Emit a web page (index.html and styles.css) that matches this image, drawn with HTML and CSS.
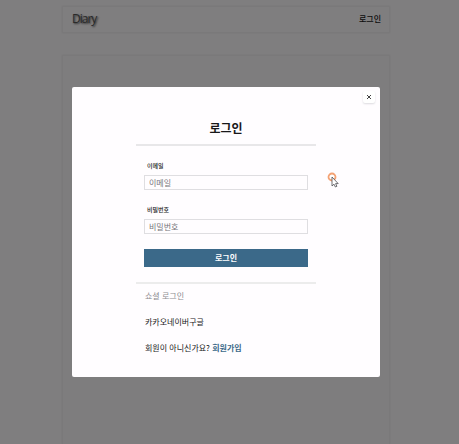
FILE: index.html
```html
<!DOCTYPE html>
<html lang="ko">
<head>
<meta charset="utf-8">
<meta name="viewport" content="width=device-width, initial-scale=1">
<title>Diary</title>
<link rel="stylesheet" href="styles.css">
</head>
<body>
<div class="page">
  <header class="header">
    <a class="logo" href="#">Diary</a>
    <a class="header-link" href="#">로그인</a>
  </header>
  <main class="board"></main>
</div>
<div class="overlay">
  <section class="dialog" role="dialog" aria-modal="true" aria-labelledby="title">
    <button class="close" type="button" aria-label="닫기">
      <svg viewBox="0 0 6 6" aria-hidden="true"><path d="M1 1L5 5M5 1L1 5"/></svg>
    </button>
    <h1 class="title" id="title">로그인</h1>
    <form class="form">
      <label class="label" for="email">이메일</label>
      <input class="field" id="email" type="email" placeholder="이메일">
      <label class="label" for="password">비밀번호</label>
      <input class="field" id="password" type="password" placeholder="비밀번호">
      <button class="submit" type="submit">로그인</button>
    </form>
    <div class="social">
      <h2 class="social-title">쇼셜 로그인</h2>
      <p class="providers"><a href="#">카카오</a><a href="#">네이버</a><a href="#">구글</a></p>
      <p class="join">회원이 아니신가요? <a class="join-link" href="#">회원가입</a></p>
    </div>
  </section>
</div>
<svg class="pointer" viewBox="0 0 12 16" aria-hidden="true">
  <circle cx="5" cy="5" r="3.5" fill="#fff" stroke="#f4a274" stroke-width="1.8"/>
  <path d="M5 5V14L7 12.200L8.400 15L9.900 14.300L8.600 11.600H11.200Z" fill="#fff" stroke="#4b4b50" stroke-width=".8"/>
</svg>
</body>
</html>
```
FILE: styles.css
```css
* {
  box-sizing: border-box;
}

body {
  margin: 0;
  height: 100vh;
  overflow: hidden;
  background: #fffdff;
  color: #18181a;
  font-family: "Noto Sans CJK KR", sans-serif;
  font-size: 8px;
  line-height: 12px;
}

a {
  color: inherit;
  text-decoration: none;
}

h1,
h2,
p {
  margin: 0;
}

.page {
  display: flex;
  flex-direction: column;
  gap: 22px;
  height: 100%;
  padding: 6px 69px 0 62px;
}

.header {
  display: flex;
  align-items: center;
  justify-content: space-between;
  height: 27px;
  padding: 0 8px 2px 9px;
  border: 1px solid #f4f2f4;
  box-shadow: 0 0 2px #eceaec;
}

.logo {
  color: #555;
  font-family: "Open Sans", sans-serif;
  font-size: 12px;
  letter-spacing: -1px;
  text-shadow: 1px 1px 2px #555;
}

.header-link {
  font-weight: 500;
}

.board {
  flex: 1;
  border: 1px solid #f4f2f4;
  border-bottom: 0;
  background: #fcfafc;
  box-shadow: 0 0 2px #eceaec;
}

.overlay {
  position: fixed;
  inset: 0;
  display: flex;
  align-items: flex-start;
  padding: 87px 79px 0 72px;
  background: rgb(0 0 0 / 50%);
}

.dialog {
  position: relative;
  flex: 1;
  padding: 32px 64px 23px;
  border-radius: 2px;
  background: #fffdff;
}

.close {
  position: absolute;
  top: 4px;
  right: 5px;
  display: grid;
  place-items: center;
  width: 12px;
  height: 12px;
  padding: 0;
  border: 0;
  border-radius: 2px;
  background: #fff;
  box-shadow: 0 1px 2px #dcdadf;
}

.close svg {
  width: 6px;
  height: 6px;
  stroke: #444;
  stroke-width: 1;
}

.title {
  padding-bottom: 7px;
  border-bottom: 2px solid #e8e7e9;
  font-size: 12px;
  font-weight: 700;
  line-height: 18px;
  text-align: center;
}

.form {
  display: flex;
  flex-direction: column;
  padding: 15px 8px;
  border-bottom: 2px solid #ececec;
}

.label {
  padding: 0 3px;
  font-size: 6px;
  font-weight: 500;
  line-height: 10px;
}

.field {
  width: 100%;
  height: 15px;
  margin: 4px 0 15px;
  padding: 0 4px 1px;
  border: 1px solid #dfdee1;
  background: #fffdff;
  font: inherit;
}

.field::placeholder {
  color: #77767a;
}

.submit {
  height: 18px;
  padding: 0;
  border: 0;
  background: #3b6989;
  color: #fff;
  font: inherit;
  font-weight: 700;
}

.social {
  display: flex;
  flex-direction: column;
  gap: 14px;
  padding: 6px 9px 0;
}

.social-title {
  color: #8d8c90;
  font-size: 8px;
  font-weight: 400;
}

.join-link {
  color: #3b6989;
  font-weight: 700;
}

.pointer {
  position: fixed;
  top: 172px;
  left: 327px;
  width: 12px;
  height: 16px;
}
```
